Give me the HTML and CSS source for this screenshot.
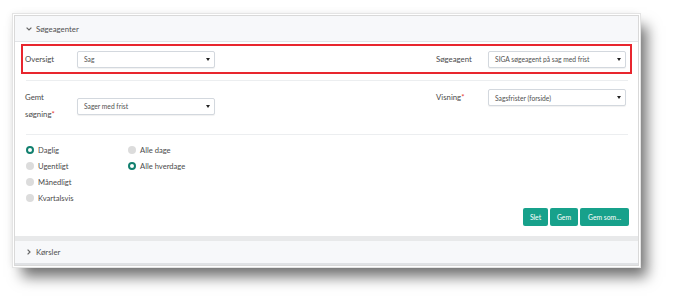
FILE: index.html
```html
<!DOCTYPE html>
<html lang="da">
<head>
<meta charset="utf-8">
<title>Søgeagenter</title>
<link rel="stylesheet" href="styles.css">
</head>
<body>
<div class="frame">
  <div class="acc-head">
    <svg class="chev" width="6" height="4" viewBox="0 0 6 4"><path d="M0.6 0.6 L3 3 L5.4 0.6" fill="none" stroke="#666" stroke-width="1.2"/></svg>
    <span>Søgeagenter</span>
  </div>
  <div class="acc-body">
    <div class="hl">
      <div class="row row1">
        <div class="grp">
          <div class="lbl">Oversigt</div>
          <div class="sel"><span>Sag</span><i class="caret"></i></div>
        </div>
        <div class="grp">
          <div class="lbl">Søgeagent</div>
          <div class="sel"><span>SIGA søgeagent på sag med frist</span><i class="caret"></i></div>
        </div>
      </div>
    </div>
    <div class="divider"></div>
    <div class="row row2">
      <div class="grp center">
        <div class="lbl two">Gemt<br>søgning<span class="req">*</span></div>
        <div class="sel"><span>Sager med frist</span><i class="caret"></i></div>
      </div>
      <div class="grp top">
        <div class="lbl one">Visning<span class="req">*</span></div>
        <div class="sel"><span>Sagsfrister (forside)</span><i class="caret"></i></div>
      </div>
    </div>
    <div class="divider d2"></div>
    <div class="radios">
      <div class="rcol">
        <div class="radio"><i class="dot on"></i>Daglig</div>
        <div class="radio"><i class="dot"></i>Ugentligt</div>
        <div class="radio"><i class="dot"></i>Månedligt</div>
        <div class="radio"><i class="dot"></i>Kvartalsvis</div>
      </div>
      <div class="rcol">
        <div class="radio"><i class="dot"></i>Alle dage</div>
        <div class="radio"><i class="dot on"></i>Alle hverdage</div>
      </div>
    </div>
    <div class="btns">
      <button class="btn b1">Slet</button>
      <button class="btn b2">Gem</button>
      <button class="btn b3">Gem som...</button>
    </div>
  </div>
  <div class="band"></div>
  <div class="acc-head foot">
    <svg class="chev" width="4" height="6" viewBox="0 0 4 6"><path d="M0.6 0.6 L3 3 L0.6 5.4" fill="none" stroke="#666" stroke-width="1.2"/></svg>
    <span>Kørsler</span>
  </div>
</div>
</body>
</html>
```
FILE: styles.css
```css
* { box-sizing: border-box; }
html, body { margin: 0; padding: 0; background: #fff; }
body {
  font-family: Lato, "Open Sans", sans-serif;
  color: #4a4a4a;
  width: 674px;
  height: 301px;
  overflow: hidden;
  padding-top: 15px;
  padding-left: 14px;
}
.frame {
  width: 625px;
  height: 251px;
  border: 1px solid #d9d9d9;
  background: #fff;
  display: flex;
  flex-direction: column;
  box-shadow: 0 0 0 1px #fff, 0 0 0 2px #e4e4e4, 8px 11px 13px rgba(0,0,0,0.55), -2px -1px 8px rgba(0,0,0,0.08);
}
.acc-head {
  height: 26px;
  flex: none;
  background: #f7f8fa;
  border-bottom: 1px solid #e2e4e7;
  display: flex;
  align-items: center;
  padding-left: 11px;
  font-size: 7.8px;
  color: #505050;
  gap: 4px;
}
.acc-head .chev { flex: none; }
.acc-head.foot {
  height: 24px;
  border-bottom: 2px solid #e0e2e5;
  padding-left: 12px;
  gap: 5px;
}
.acc-body {
  flex: 1;
  padding: 2px 10px 0 10px;
  display: flex;
  flex-direction: column;
}
.hl {
  margin: 0 -4px 0 -4px;
  height: 30px;
  border: 2px solid #e8262e;
  padding: 0 4px 0 2px;
  display: flex;
  align-items: center;
}
.row {
  display: flex;
  justify-content: space-between;
  width: 601px;
}
.grp { display: flex; align-items: center; }
.grp.top { align-items: flex-start; }
.lbl {
  width: 52px;
  font-size: 7.8px;
  color: #4a4a4a;
}
.lbl.two, .lbl.one { line-height: 17px; }
.req { color: #e53935; }
.sel {
  width: 138px;
  height: 17px;
  border: 1px solid #d3d8de;
  border-radius: 2px;
  box-shadow: 0 1px 1px rgba(0,0,0,0.06);
  background: #fff;
  display: flex;
  align-items: center;
  justify-content: space-between;
  padding: 0 4px 0 6px;
  font-size: 6.7px;
  color: #505050;
}
.caret {
  width: 0; height: 0;
  border-left: 2px solid transparent;
  border-right: 2px solid transparent;
  border-top: 3px solid #222;
}
.divider {
  height: 1px;
  background: #eceef0;
  margin: 6px 0 0 1px;
  width: 602px;
}
.row2 { margin-top: 8px; }
.divider.d2 { margin-top: 11px; }
.radios {
  display: flex;
  margin-top: 7px;
  padding-left: 1px;
}
.rcol { width: 102px; display: flex; flex-direction: column; }
.radio {
  height: 16px;
  display: flex;
  align-items: center;
  font-size: 7.6px;
  color: #4a4a4a;
}
.dot {
  width: 8px; height: 8px;
  border-radius: 50%;
  background: #dcdcdc;
  margin-right: 4px;
  flex: none;
}
.dot.on {
  background: #fff;
  border: 2.6px solid #12806f;
}
.btns {
  display: flex;
  justify-content: flex-end;
  gap: 2px;
  margin-top: 2px;
  width: 604px;
}
.btn {
  height: 18px;
  border: none;
  border-radius: 2px;
  background: #17a18b;
  color: #fff;
  font-family: Lato, "Open Sans", sans-serif;
  font-size: 6.8px;
  padding: 0;
}
.b1 { width: 25px; }
.b2 { width: 28px; }
.b3 { width: 49px; }
.band {
  height: 5px;
  flex: none;
  background: #e8e9ea;
}
```
